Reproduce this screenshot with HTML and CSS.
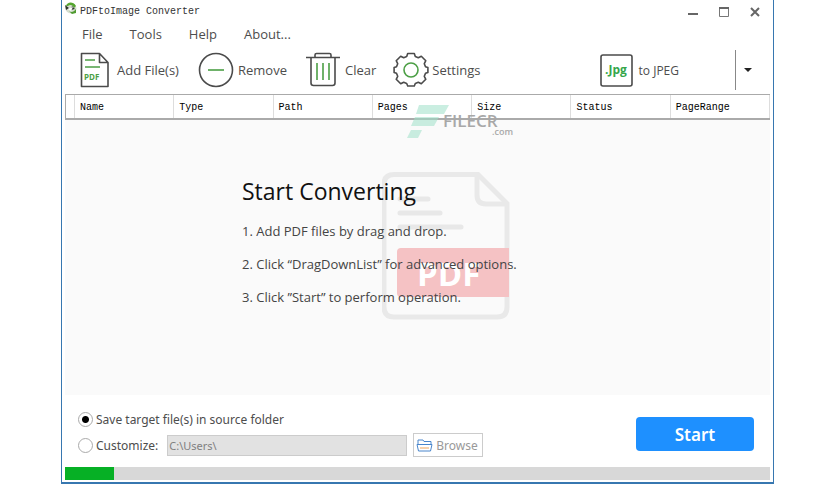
FILE: index.html
```html
<!DOCTYPE html>
<html lang="en">
<head>
<meta charset="utf-8">
<title>PDFtoImage Converter</title>
<link rel="stylesheet" href="styles.css">
</head>
<body>
<div class="window">
  <header class="titlebar">
    <svg class="app-icon" width="12" height="13" viewBox="0 0 12 13" aria-hidden="true">
      <ellipse cx="6" cy="6.500" rx="5.500" ry="5" fill="#d5ddd0"/>
      <path d="M1 4C2 0 8-1 11 4L9 6C8 3 5 2 3 4z" fill="#55a52f"/>
      <path d="M4 9c2 2 5 1 7-2v4l-4 1z" fill="#4f9b30"/>
      <path d="M0 3l4 3-3 2zM7 4l3 3-4 1z" fill="#2d352c"/>
      <path d="M3 7l5-2-2 4z" fill="#fff"/>
    </svg>
    <h1 class="title">PDFtoImage Converter</h1>
    <div class="window-controls">
      <button type="button" aria-label="Minimize"><svg width="12" height="12" viewBox="0 0 12 12"><path d="M1 8h10" stroke="#666" stroke-width="2"/></svg></button>
      <button type="button" aria-label="Maximize"><svg width="12" height="12" viewBox="0 0 12 12"><path d="M1.500 2v8.500h9V2" fill="none" stroke="#777"/><path d="M1 2h10" stroke="#666" stroke-width="2"/></svg></button>
      <button type="button" aria-label="Close"><svg width="12" height="12" viewBox="0 0 12 12"><path d="M2 2l8 8M10 2l-8 8" stroke="#666" stroke-width="2"/></svg></button>
    </div>
  </header>
  <nav class="menu">
    <button type="button">File</button>
    <button type="button">Tools</button>
    <button type="button">Help</button>
    <button type="button">About...</button>
  </nav>
  <div class="toolbar">
    <button type="button" class="tool tool-add">
      <svg width="30" height="36" viewBox="0 0 30 36" aria-hidden="true">
        <path d="M1.500 1.500h18l8.500 9v24H1.500zM19.500 1.500v9H28" fill="none" stroke="#4b4b4b" stroke-width="1.600" stroke-linejoin="round"/>
        <path d="M5 8h10M5 15h15" stroke="#4c9f45" stroke-width="1.600"/>
        <text x="4" y="28" class="pdf-label">PDF</text>
      </svg>
      <span>Add File(s)</span>
    </button>
    <button type="button" class="tool tool-remove">
      <svg width="36" height="36" viewBox="0 0 36 36" aria-hidden="true">
        <circle cx="18" cy="18" r="16.500" fill="none" stroke="#4b4b4b" stroke-width="1.600"/>
        <path d="M10 18h16" stroke="#4c9f45" stroke-width="1.600"/>
      </svg>
      <span>Remove</span>
    </button>
    <button type="button" class="tool tool-clear">
      <svg width="36" height="36" viewBox="0 0 36 36" aria-hidden="true">
        <path d="M1 5.500h34M10 5V3q0-1.500 1.500-1.500h13Q26 1.500 26 3v2M6 6v25q0 2.500 2.500 2.500h19q2.500 0 2.500-2.500V6" fill="none" stroke="#4b4b4b" stroke-width="1.600"/>
        <path d="M12 11v17M18 11v17M24 11v17" stroke="#4c9f45" stroke-width="1.600"/>
      </svg>
      <span>Clear</span>
    </button>
    <button type="button" class="tool tool-settings">
      <svg width="36" height="36" viewBox="0 0 36 36" aria-hidden="true">
        <path d="M14.700 1.500h6.600l1 3 3 1.200 3-1.500 4.500 4.500-1.500 3 1.200 3 2.400.8v5l-2.400.8-1.200 3 1.500 3-4.500 4.500-3-1.500-3 1.200-1 2.500h-6.600l-1-2.500-3-1.200-3 1.500-4.500-4.500 1.500-3-1.200-3-2.400-.8v-5l2.400-.8 1.200-3-1.500-3 4.500-4.500 3 1.500 3-1.200z" fill="none" stroke="#4b4b4b" stroke-width="1.600" stroke-linejoin="round"/>
        <circle cx="18" cy="18" r="7" fill="none" stroke="#4c9f45" stroke-width="1.600"/>
      </svg>
      <span>Settings</span>
    </button>
    <button type="button" class="tool tool-format">
      <svg width="33" height="33" viewBox="0 0 33 33" aria-hidden="true">
        <rect x="1" y="1" width="31" height="31" rx="2" fill="#fff" stroke="#4b4b4b" stroke-width="1.600"/>
        <text x="16" y="20" text-anchor="middle" class="jpg-label">.Jpg</text>
      </svg>
      <span>to JPEG</span>
    </button>
    <button type="button" class="format-arrow" aria-label="Choose format"><svg width="8" height="5" viewBox="0 0 8 5"><path d="M0 0h8L4 4z" fill="#222"/></svg></button>
  </div>
  <main class="content">
    <table class="files">
      <colgroup><col class="col-mark"><col><col><col><col><col><col><col></colgroup>
      <thead><tr><td></td><th scope="col">Name</th><th scope="col">Type</th><th scope="col">Path</th><th scope="col">Pages</th><th scope="col">Size</th><th scope="col">Status</th><th scope="col">PageRange</th></tr></thead>
    </table>
    <svg class="watermark" width="108" height="36" viewBox="0 0 108 36">
      <path d="M10 1h30l-5 9H7zM6 13h24l-5 9H2zM2 26h11l-4 8H-2z" fill="#9fe0c8" opacity=".55"/>
      <text x="34" y="23" class="mark-name">FILECR</text>
      <text x="83" y="31" class="mark-suffix">.com</text>
    </svg>
    <section class="drop-area">
      <svg class="document" width="128" height="148" viewBox="0 0 128 148" aria-hidden="true">
        <path d="M12 2.500h84l29 29V135q0 10-10 10H12q-10 0-10-10V12.500q0-10 10-10z" fill="none" stroke="#e9e9e9" stroke-width="5"/>
        <path d="M95 4v19q0 9 9 9h20" fill="none" stroke="#e9e9e9" stroke-width="5"/>
        <path d="M18 27h28M18 41h40M18 55h61" stroke="#e8e8e8" stroke-width="5" stroke-linecap="round"/>
        <path d="M19 76h108v49H19q-4 0-4-4V80q0-4 4-4z" fill="#f5c2c4"/>
        <text x="35" y="114" class="document-label">PDF</text>
      </svg>
      <h2>Start Converting</h2>
      <ol>
        <li>1. Add PDF files by drag and drop.</li>
        <li>2. Click “DragDownList” for advanced options.</li>
        <li>3. Click ”Start” to perform operation.</li>
      </ol>
    </section>
  </main>
  <footer class="output">
    <div class="targets">
      <label class="choice"><input type="radio" name="target" checked><span>Save target file(s) in source folder</span></label>
      <div class="custom">
        <label class="choice"><input type="radio" name="target"><span>Customize:</span></label>
        <input type="text" class="path" aria-label="Custom folder" value="C:\Users\" disabled>
        <button type="button" class="browse" disabled>
          <svg width="17" height="13" viewBox="0 0 17 13" aria-hidden="true">
            <path d="M2 5V1h5l1 1.500h7V5M1 5.500h15l-1.500 6.500h-12z" fill="none" stroke="#4a86cc"/>
            <path d="M4 9h9" stroke="#efa45b"/>
          </svg>
          <span>Browse</span>
        </button>
      </div>
    </div>
    <button type="button" class="start">Start</button>
  </footer>
  <div class="progress" role="progressbar" aria-label="Conversion" aria-valuenow="7"><div class="bar" style="width:7%"></div></div>
</div>
</body>
</html>
```
FILE: styles.css
```css
* { box-sizing: border-box; }

body {
  margin: 0;
  padding: 0 62px 0 61px;
  background: #fff;
  color: #4d4d4d;
  font-family: "Open Sans", sans-serif;
  font-size: 13px;
}

button {
  margin: 0;
  padding: 0;
  border: 0;
  background: none;
  color: inherit;
  font: inherit;
}

svg { display: block; flex: none; }

.window {
  display: flex;
  flex-direction: column;
  min-height: 100vh;
  border: 1px solid #3777b0;
  border-top: 0;
  border-bottom-width: 2px;
}

.titlebar {
  display: flex;
  align-items: center;
  gap: 3px;
  height: 23px;
  padding: 0 12px 0 3px;
}

.app-icon { margin-bottom: 7px; }

.title {
  margin: 0;
  color: #333;
  font: 10px "Liberation Mono", monospace;
}

.window-controls {
  display: flex;
  gap: 19px;
  margin-left: auto;
}

.menu {
  display: flex;
  gap: 27px;
  height: 23px;
  padding: 0 20px 2px;
}

.toolbar {
  display: flex;
  align-items: center;
  height: 48px;
  padding: 0 4px 0 18px;
}

.tool { display: flex; align-items: center; }
.tool-add { gap: 7px; margin-right: 19px; }
.tool-remove { gap: 4px; margin-right: 18px; }
.tool-clear { gap: 4px; margin-right: 17px; }
.tool-settings { gap: 3px; }

.tool-format {
  gap: 6px;
  margin-left: auto;
  margin-right: 56px;
  font-size: 12px;
}

.format-arrow {
  display: grid;
  place-items: center;
  width: 34px;
  height: 40px;
  padding-right: 9px;
  border-left: 1px solid #888;
}

.pdf-label { fill: #4c9f45; font: bold 8px "Open Sans", sans-serif; }
.jpg-label { fill: #35a64a; font: bold 12px "Open Sans", sans-serif; }

.content {
  position: relative;
  display: flex;
  flex: 1;
  flex-direction: column;
  margin: 0 3px;
  background: #fafafa;
}

.files {
  width: 100%;
  height: 26px;
  border: solid #aaa;
  border-width: 1px 0 2px 1px;
  border-spacing: 0;
  background: #fff;
  color: #000;
  font: 10px "Liberation Mono", monospace;
  table-layout: fixed;
}

.col-mark { width: 9px; }

.files td,
.files th {
  padding: 2px 0 0 5px;
  border-right: 1px solid #ddd;
  font-weight: normal;
  text-align: left;
}

.files td { padding: 0; }

.watermark {
  position: absolute;
  top: 10px;
  left: 344px;
  overflow: visible;
}

.mark-name { fill: #a8a8a8; font: 600 17px "Open Sans", sans-serif; }
.mark-suffix { fill: #a8a8a8; font: 600 9px "Open Sans", sans-serif; }

.drop-area {
  position: relative;
  flex: 1;
  padding: 55px 0 0 177px;
  color: #444;
}

.document {
  position: absolute;
  top: 52px;
  left: 317px;
}

.document-label { fill: #fff; font: bold 33px "Open Sans", sans-serif; }

.drop-area h2,
.drop-area ol { position: relative; }

.drop-area h2 {
  margin: 0;
  color: #111;
  font-size: 23px;
  font-weight: 400;
  line-height: 32px;
}

.drop-area ol {
  margin: 8px 0 0;
  padding: 0;
  font-size: 13px;
  line-height: 33px;
  list-style: none;
}

.output {
  display: flex;
  align-items: center;
  justify-content: space-between;
  height: 72px;
  padding: 6px 19px 0 16px;
}

.targets {
  display: flex;
  flex-direction: column;
  gap: 5px;
  font-family: "Noto Sans", sans-serif;
  font-size: 12px;
}

.choice,
.custom,
.browse { display: flex; align-items: center; }

.choice { gap: 3px; }

.choice input {
  width: 15px;
  height: 15px;
  margin: 0;
  border: 1px solid #aaa;
  border-radius: 50%;
  appearance: none;
  background: #fff;
}

.choice input:checked { background: radial-gradient(circle, #000 3px, #fff 4px); }

.path {
  width: 240px;
  height: 21px;
  margin: 0 6px 0 9px;
  padding: 0 1px;
  border: 1px solid #ccc;
  background: #e2e2e2;
  color: #808080;
  font: 11px "Noto Sans", sans-serif;
}

.browse {
  gap: 3px;
  height: 24px;
  padding: 0 4px 0 2px;
  border: 1px solid #ccc;
  color: #999;
}

.start {
  width: 118px;
  height: 34px;
  border-radius: 4px;
  background: #1e90ff;
  color: #fff;
  font-family: "Noto Sans", sans-serif;
  font-size: 17px;
  font-weight: 600;
}

.progress {
  height: 13px;
  margin: 0 3px 2px;
  background: #d8d8d8;
}

.bar { height: 100%; background: #06b025; }
```
